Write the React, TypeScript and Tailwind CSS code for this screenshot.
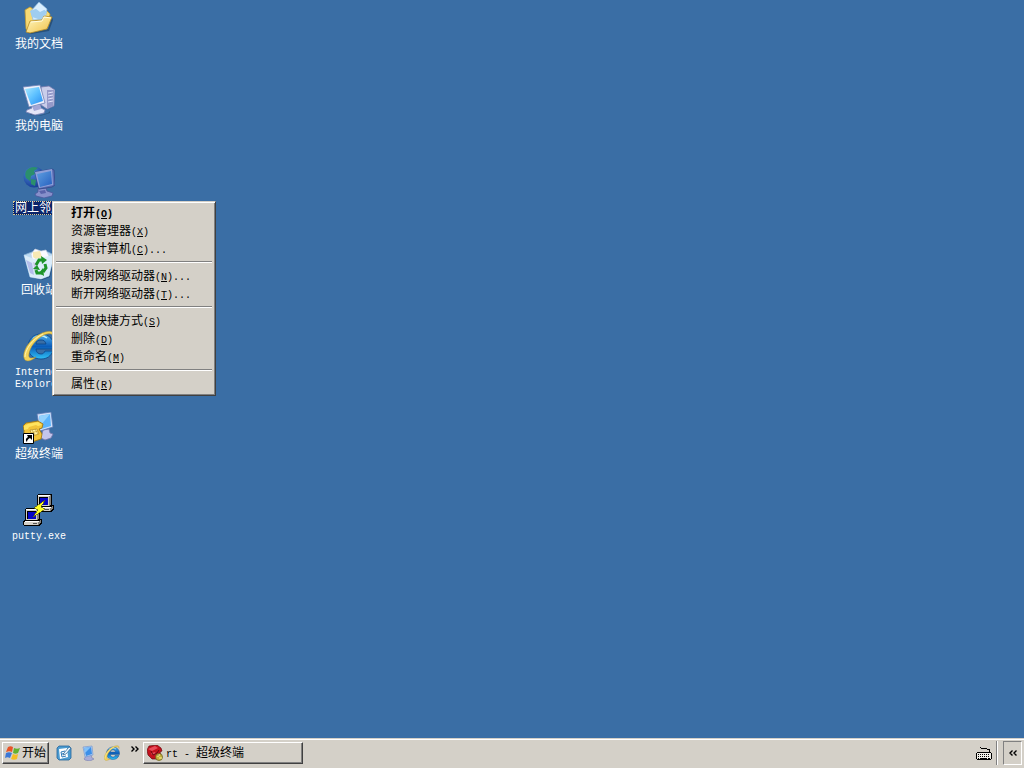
import { useState } from 'react'
import type { ReactNode } from 'react'

interface DesktopItem {
  id: string
  lines: string[]
  latin?: boolean
  icon: ReactNode
}

interface MenuEntry {
  text: string
  hotkey: string
  dots?: boolean
  bold?: boolean
}

function FolderIcon() {
  return (
    <svg viewBox="0 0 32 32" className="h-8 w-8" aria-hidden="true">
      <defs>
        <linearGradient id="folder" x1="0" y1="0" x2="1" y2="1">
          <stop offset="0" stopColor="#fffbc8" />
          <stop offset="1" stopColor="#f0bf45" />
        </linearGradient>
      </defs>
      <path d="M5 31 25 27l4-12 1 3-4 11-18 3z" fill="#1d3c5e" opacity=".6" />
      <path d="M2 8 7 5l3 2 13 1 4 4-2 12-18 6-4-3z" fill="#f7da74" stroke="#c39b2e" strokeWidth=".8" />
      <path d="M16 0 24 7l-2 10-12 1-2-9z" fill="#d8ecfb" stroke="#8eb9dc" strokeWidth=".7" />
      <path d="M7 9 18 5l6 5-6 8-9-3z" fill="#9fcdf0" />
      <path d="M16 1 23 7l-6 3-5-4z" fill="#d9efff" />
      <path d="M3 30 7 19l12-1 2-4 8 1-5 12-17 4z" fill="url(#folder)" stroke="#b88c22" strokeWidth=".8" />
      <path d="m8 20 11-1 2-4 7 1" fill="none" stroke="#fffde4" />
    </svg>
  )
}

function ComputerIcon() {
  return (
    <svg viewBox="0 0 32 32" className="h-8 w-8" aria-hidden="true">
      <defs>
        <linearGradient id="screen" x1="0" y1="0" x2="1" y2="1">
          <stop offset="0" stopColor="#a8e8ff" />
          <stop offset=".5" stopColor="#5cc0ff" />
          <stop offset="1" stopColor="#2a8cf0" />
        </linearGradient>
      </defs>
      <path d="m18 3 8-1 6 4-1 16-7 3-6-4z" fill="#c9cdea" stroke="#7579ac" strokeWidth=".8" />
      <path d="m24 6 7 0-1 16-6 3z" fill="#9499c9" />
      <path d="m25 9 5-1M25 12l5-1M25 15l5-1M25 18l5-1" stroke="#e8eaff" strokeWidth=".9" />
      <path d="m5 28 10 4 10-3 2-2 0 2-10 3-9-1z" fill="#1d3c5e" opacity=".5" />
      <path d="m8 21 9-1 1 4 4 2-1 3-9 2-9-3 1-2 5-2z" fill="#e4e5f7" stroke="#7e83b5" strokeWidth=".8" />
      <path d="m9 22 8-1 1 4-7 2z" fill="#a3a6d6" />
      <path d="m0 3 17-2 5 18-16 4z" fill="#eef0fb" stroke="#6e80b5" strokeWidth=".8" />
      <path d="m2 5 14-2 4 14-12 4z" fill="url(#screen)" />
    </svg>
  )
}

function NetworkIcon() {
  return (
    <svg viewBox="0 0 32 32" className="h-8 w-8" aria-hidden="true">
      <defs>
        <radialGradient id="globe" cx=".35" cy=".3" r=".8">
          <stop offset="0" stopColor="#4c8ad6" />
          <stop offset="1" stopColor="#12348f" />
        </radialGradient>
        <linearGradient id="dim" x1="0" y1="0" x2="1" y2="1">
          <stop offset="0" stopColor="#5f9fe0" />
          <stop offset="1" stopColor="#2660c0" />
        </linearGradient>
      </defs>
      <circle cx="11" cy="11" r="10.5" fill="url(#globe)" />
      <path d="M3 5c3-4 8-5 12-3l-4 3 1 3-4 2-1 5-4-3c-1-3-1-5 0-7z" fill="#2b8f6c" />
      <path d="m8 13 5 1-1 6-4-2z" fill="#2b8f6c" />
      <path d="m15 23 8-1 1 3 6 2-1 3-8 2-8-2-1-2 3-2z" fill="#8790cb" stroke="#4b579c" strokeWidth=".8" />
      <path d="m16 25 6-1 1 3-5 1z" fill="#5a63aa" />
      <path d="m12 6 17-3 2 1 1 15-3 2-13 2z" fill="#5b6db4" stroke="#334889" strokeWidth=".8" />
      <path d="m12 6 17-3 1 16-14 3z" fill="#8fa0d8" />
      <path d="m14 8 14-3 1 13-12 3z" fill="url(#dim)" />
    </svg>
  )
}

function RecycleIcon() {
  return (
    <svg viewBox="0 0 32 32" className="h-8 w-8" aria-hidden="true">
      <path d="m7 29 12 3 8-3 5-20-6 18z" fill="#1d3c5e" opacity=".6" />
      <path d="m1 7 8-3 16 0 6 3-5 21-8 3-11-2z" fill="#b9d9f2" stroke="#86b0d6" strokeWidth=".8" />
      <path d="m8 6 4-5 6 2 5-1 3 6-3 6-13 1z" fill="#fafaff" stroke="#c6cfdf" strokeWidth=".6" />
      <path d="m10 4 7-1 2 6-5 3-4-3z" fill="#f8e9b4" />
      <path d="m1 7 10 4 20-4-5 21-8 3-11-2z" fill="#dceefa" opacity=".92" />
      <path d="m3 12 6 3 2 12-4-2z" fill="#a9b2e6" opacity=".8" />
      <path d="m10 14 4 2-2 9z" fill="#c9b6e2" opacity=".7" />
      <g fill="none" stroke="#1d9429" strokeWidth="3">
        <path d="m13 17 3-5 4 0" />
        <path d="m22 16 1 4-3 4" />
        <path d="m19 25-5 0-1-3" />
      </g>
      <path d="m18 8 6 4-5 4zM20 20l-4 5 5 3zM10 21l4-4 3 5z" fill="#1d9429" />
    </svg>
  )
}

function ExplorerIcon({ className }: { className: string }) {
  return (
    <svg viewBox="0 0 32 32" className={className} aria-hidden="true">
      <defs>
        <linearGradient id="ie" x1="0" y1="0" x2="0" y2="1">
          <stop offset="0" stopColor="#4fb4f0" />
          <stop offset=".5" stopColor="#0c5cb8" />
          <stop offset="1" stopColor="#2fc0f5" />
        </linearGradient>
      </defs>
      <path
        d="M18 4C10 4 5 10 5 17s5 12 13 12c6 0 10-3 12-8h-8c-1 2-2 3-4 3-3 0-5-2-5-5h18C32 10 26 4 18 4zm-5 10c0-3 2-4 5-4s4 1 5 4z"
        fill="url(#ie)"
        fillRule="evenodd"
        stroke="#0b4487"
        strokeWidth=".8"
      />
      <path d="M10 9c3-4 10-4 14-1" fill="none" stroke="#b9ecff" strokeWidth="1.5" />
      <path
        d="M30 7C32 0 25 0 17 4 7 9-1 21 1 28c1 5 8 3 12-1-5 2-8 1-7-3C7 17 13 9 21 5c5-2 9-2 9 2z"
        fill="#f2d258"
        stroke="#a58b36"
        strokeWidth=".5"
      />
      <path d="M2 27C2 20 9 9 20 4" fill="none" stroke="#fff3ad" />
    </svg>
  )
}

function HyperTerminalIcon() {
  return (
    <svg viewBox="0 0 32 32" className="h-8 w-8" aria-hidden="true">
      <path d="m20 18 6-1 1 4 3 1-2 4-6 2-6-3 3-3z" fill="#c3c5ec" stroke="#7779aa" strokeWidth=".8" />
      <path d="m14 2 14-2 2 15-13 4z" fill="#cfe0fa" stroke="#5c77b0" strokeWidth=".8" />
      <path d="m16 4 11-2 1 12-10 3z" fill="#5cb4fb" />
      <path d="m16 4 11-2-9 11z" fill="#93d2fd" />
      <path d="m0 14 3-3 12-2 5 3-1 4-3 1 3 5-1 5-9 3-8-3 0-9z" fill="#f2c43a" stroke="#a37812" strokeWidth=".9" />
      <path d="m1 14 4-2 10-2 4 3-4 1-2-1-7 2-1 2-4 1z" fill="#ffe45f" />
      <path d="m7 18 7-1 2 5-7 2z" fill="#fff0a0" stroke="#b68b20" strokeWidth=".7" />
      <path d="m9 18 3 5M12 17l3 5M8 21l7-2" stroke="#b68b20" strokeWidth=".6" />
      <path d="M.5 21.5h10v10H.5z" fill="#fff" stroke="#000" />
      <path d="M4 23h5v5l-2-2c-2 1-3 2-3 4-2-2-1-4 1-5z" fill="#000" />
    </svg>
  )
}

function PuttyComputer() {
  return (
    <>
      <path d="m14 1 1-1h13l1 1v10h1l1 1v3l-3 3H13l-1-1v-4l2-1z" fill="#000" />
      <path d="M15 2h11v10H15zM13 14h14v3H13z" fill="#d4d0c8" />
      <path d="M15 1h12v1H15zM14 13h14v1H14z" fill="#fff" />
      <path d="m26 2 2-1v9l-2 2zM27 14l3-2v2l-3 3z" fill="#87847e" />
      <path d="M16 3h9v8h-9z" fill="#000" />
      <path d="M17 4h8v7h-8z" fill="#0505c8" />
      <path d="M22 15h4v1h-4z" fill="#555" />
    </>
  )
}

function PuttyIcon() {
  return (
    <svg viewBox="0 0 32 32" className="h-8 w-8" shapeRendering="crispEdges" aria-hidden="true">
      <PuttyComputer />
      <g transform="translate(-12 14)">
        <PuttyComputer />
      </g>
      <path d="M22 6 11 14l4 2-5 7 12-8-4-2z" fill="#ffff26" stroke="#57570c" strokeWidth=".7" />
    </svg>
  )
}

function WindowsFlag() {
  return (
    <svg viewBox="0 0 16 16" className="h-4 w-4" aria-hidden="true">
      <path d="M3 2c2-1 3-1 5 0L7 7C5 6 4 6 1 7z" fill="#e85426" />
      <path d="M9 3c2 1 4 1 6 0l-2 5c-2 1-3 1-5 0z" fill="#62b22e" />
      <path d="M1 8c2-1 4-1 6 0l-2 5c-2-1-3-1-5 0z" fill="#3c78d6" />
      <path d="M8 9c2 1 3 1 5 0l-1 5c-2 1-4 1-6 0z" fill="#f5bd22" />
    </svg>
  )
}

function ShowDesktopIcon() {
  return (
    <svg viewBox="0 0 16 16" className="h-4 w-4" aria-hidden="true">
      <path d="m1 3 2-2h10l2 2v10l-2 2H3l-2-2z" fill="#4b9bd0" stroke="#24659d" strokeWidth=".8" />
      <path d="m3 4 8-1 1 9-8 2z" fill="#fff" />
      <path d="M9 6 5 7l1 5 4-1M6 9l3-1" fill="none" stroke="#2a78b8" />
      <path d="m8 8 5-6 2 1-5 6-3 1z" fill="#eef8ff" stroke="#226094" strokeWidth=".7" />
    </svg>
  )
}

function SmallMonitorIcon() {
  return (
    <svg viewBox="0 0 16 16" className="h-4 w-4" aria-hidden="true">
      <path d="m6 11 5-1 1 3 2 1-4 2-5-1-1-1z" fill="#a8acd8" stroke="#777daf" strokeWidth=".6" />
      <path d="m3 2 9-1 1 9-8 2z" fill="#b4cff2" stroke="#6a8ecb" strokeWidth=".6" />
      <path d="m4 3 7-1 1 7-6 2z" fill="#3c8fe8" />
      <path d="m4 3 7-1-6 6z" fill="#82c0f8" />
    </svg>
  )
}

function RedPhoneIcon() {
  return (
    <svg viewBox="0 0 16 16" className="h-4 w-4" aria-hidden="true">
      <path d="m0 5 2-4 8-1 4 3 1 3-2 1 1 4-4 3-5 0-4-4z" fill="#c4101c" stroke="#650a10" strokeWidth=".7" />
      <path d="m1 4 7-3 3 2-6 3zM4 8l4-1 1 2-4 1z" fill="#e84d5a" />
      <path d="m4 6 2 4 4-2 2-3" fill="none" stroke="#650a10" />
      <circle cx="12" cy="12" r="3.5" fill="#c3b13d" stroke="#62591a" strokeWidth=".7" />
      <path d="M10 11h2v-2M12 13h3" stroke="#fff49a" />
    </svg>
  )
}

function KeyboardIcon() {
  return (
    <svg viewBox="0 0 16 14" className="h-[14px] w-4" shapeRendering="crispEdges" aria-hidden="true">
      <path d="M4 1h1v1H4zM5 2h2v1H5zM7 3h2v-1H7zM9 2h2v1H9zM11 3h2v1h-2zM13 3h1v3h-1z" fill="#000" />
      <path d="M1 6h14v1h1v6h-1v1H1v-1H0V7h1z" fill="#000" />
      <path d="M1 7h14v6H1z" fill="#f0eee8" />
      <path d="M2 8.5h12M2 10.5h12" stroke="#000" strokeDasharray="1 1" />
      <path d="M2 12h1v1H2zM4 12h7v1H4zM12 12h2v1h-2z" fill="#000" />
    </svg>
  )
}

function Chevrons({ d }: { d: string }) {
  return (
    <svg viewBox="0 0 8 6" className="h-[6px] w-2" aria-hidden="true">
      <path d={d} fill="none" stroke="#000" strokeWidth="1.4" />
    </svg>
  )
}

const desktopItems: DesktopItem[] = [
  { id: 'documents', lines: ['我的文档'], icon: <FolderIcon /> },
  { id: 'computer', lines: ['我的电脑'], icon: <ComputerIcon /> },
  { id: 'network', lines: ['网上邻居'], icon: <NetworkIcon /> },
  { id: 'recycle', lines: ['回收站'], icon: <RecycleIcon /> },
  { id: 'ie', lines: ['Internet', 'Explorer'], latin: true, icon: <ExplorerIcon className="h-8 w-8" /> },
  { id: 'terminal', lines: ['超级终端'], icon: <HyperTerminalIcon /> },
  { id: 'putty', lines: ['putty.exe'], latin: true, icon: <PuttyIcon /> }
]

const menuGroups: MenuEntry[][] = [
  [
    { text: '打开', hotkey: 'O', bold: true },
    { text: '资源管理器', hotkey: 'X' },
    { text: '搜索计算机', hotkey: 'C', dots: true }
  ],
  [
    { text: '映射网络驱动器', hotkey: 'N', dots: true },
    { text: '断开网络驱动器', hotkey: 'T', dots: true }
  ],
  [
    { text: '创建快捷方式', hotkey: 'S' },
    { text: '删除', hotkey: 'D' },
    { text: '重命名', hotkey: 'M' }
  ],
  [{ text: '属性', hotkey: 'R' }]
]

const raised = 'border border-t-white border-l-white border-r-[#404040] border-b-[#404040] shadow-[inset_-1px_-1px_#808080]'

function ContextMenu({ onClose }: { onClose: () => void }) {
  return (
    <div
      role="menu"
      className="absolute left-[52px] top-[201px] z-10 border border-t-[#d4d0c8] border-l-[#d4d0c8] border-r-[#404040] border-b-[#404040] bg-[#d4d0c8] p-[2px] shadow-[inset_1px_1px_#fff,inset_-1px_-1px_#808080]"
    >
      {menuGroups.map((group, index) => (
        <div key={index}>
          {index > 0 && (
            <div role="separator" className="mx-px h-[9px] pt-[3px]">
              <div className="border-b border-t border-b-white border-t-[#808080]" />
            </div>
          )}
          {group.map((entry) => (
            <button
              key={entry.text}
              role="menuitem"
              onClick={onClose}
              className={`block h-[18px] w-full whitespace-nowrap pl-4 pr-[22px] text-left leading-[18px] hover:bg-[#0a246a] hover:text-white ${entry.bold ? 'font-bold' : ''}`}
            >
              {entry.text}
              <span className="font-['Liberation_Mono',monospace] text-[10px]">
                (<span className="underline underline-offset-1">{entry.hotkey}</span>){entry.dots && '...'}
              </span>
            </button>
          ))}
        </div>
      ))}
    </div>
  )
}

export default function App() {
  const [selected, setSelected] = useState('network')
  const [menuOpen, setMenuOpen] = useState(true)

  return (
    <div className="flex h-screen flex-col overflow-hidden bg-[#3a6ea5] font-['Liberation_Sans','Noto_Sans_CJK_SC',sans-serif] text-[12px] text-black">
      <main className="relative min-h-0 flex-1">
        {/* Desktop icons */}
        <div className="flex w-[78px] flex-col">
          {desktopItems.map((item) => (
            <button
              key={item.id}
              onClick={() => {
                setSelected(item.id)
                setMenuOpen(false)
              }}
              onContextMenu={(e) => {
                e.preventDefault()
                setSelected(item.id)
                setMenuOpen(item.id === 'network')
              }}
              className="flex h-[82px] flex-col items-center gap-[3px] pt-[2px] text-white"
            >
              {item.icon}
              <span
                className={`border border-dotted px-px leading-[12px] ${selected === item.id ? 'border-[#d9c98f] bg-[#0a246a]' : 'border-transparent'} ${item.latin ? "pt-px font-['Liberation_Mono',monospace] text-[10px]" : ''}`}
              >
                {item.lines.map((line) => (
                  <span key={line} className="block whitespace-nowrap">{line}</span>
                ))}
              </span>
            </button>
          ))}
        </div>

        {menuOpen && <ContextMenu onClose={() => setMenuOpen(false)} />}
      </main>

      {/* Taskbar */}
      <footer className="flex h-[30px] items-center bg-[#d4d0c8] px-[2px] shadow-[inset_0_1px_#d4d0c8,inset_0_2px_#fff]">
        <button className={`flex h-[22px] items-center gap-px px-[2px] ${raised}`}>
          <WindowsFlag />
          <span className="whitespace-nowrap">开始</span>
        </button>
        <div className="ml-[7px] flex items-center gap-2">
          <button aria-label="显示桌面"><ShowDesktopIcon /></button>
          <button aria-label="我的电脑"><SmallMonitorIcon /></button>
          <button aria-label="Internet Explorer"><ExplorerIcon className="h-4 w-4" /></button>
        </div>
        <button aria-label="更多" className="mb-2 ml-[11px]">
          <Chevrons d="M.5 .5 3 3 .5 5.5M4.5 .5 7 3 4.5 5.5" />
        </button>
        <button className={`ml-1 flex h-[22px] w-40 items-center gap-[3px] px-[3px] ${raised}`}>
          <RedPhoneIcon />
          <span className="whitespace-nowrap">
            <span className="whitespace-pre font-['Liberation_Mono',monospace] text-[10px]">rt - </span>超级终端
          </span>
        </button>
        <div className="ml-auto flex items-center">
          <button aria-label="键盘"><KeyboardIcon /></button>
          <div className="ml-1 h-6 border-l border-r border-l-[#808080] border-r-white" />
          <button
            aria-label="展开"
            className="ml-[5px] flex h-6 w-[19px] items-center justify-center border border-b-white border-l-[#808080] border-r-white border-t-[#808080]"
          >
            <Chevrons d="M3.5 .5 1 3l2.5 2.5M7.5 .5 5 3l2.5 2.5" />
          </button>
        </div>
      </footer>
    </div>
  )
}
